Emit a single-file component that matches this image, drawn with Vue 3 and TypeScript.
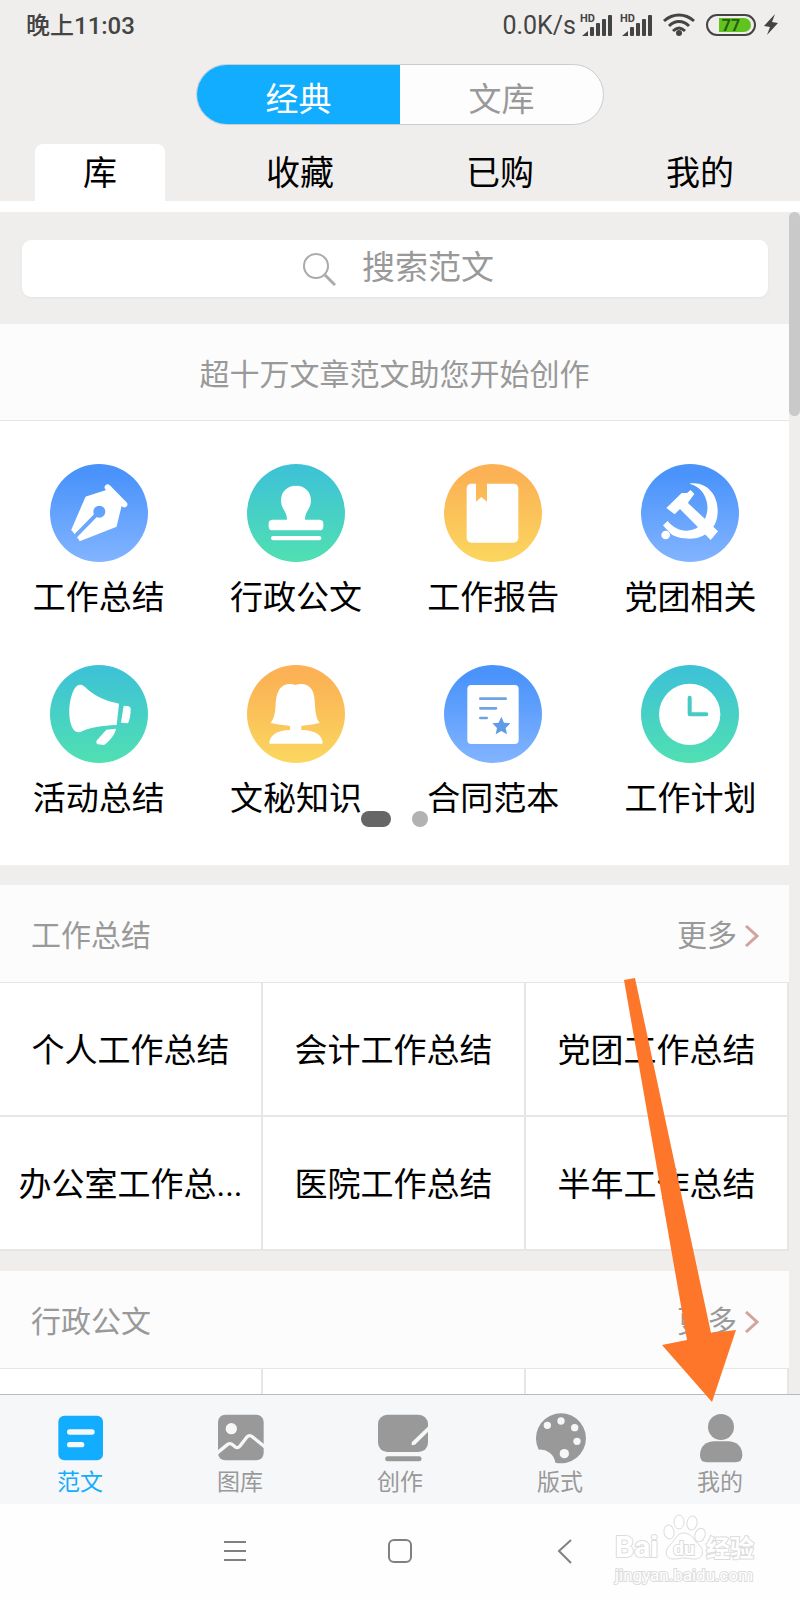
<script setup lang="ts">
import { ref } from 'vue'

interface Category {
  label: string
  icon: string
}
interface Section {
  title: string
  items: string[]
}

const segments: string[] = ['经典', '文库']
const tabs: string[] = ['库', '收藏', '已购', '我的']
const activeSegment = ref(0)
const activeTab = ref(0)
const activeNav = ref(0)
const keyword = ref('')

const categories: Category[] = [
  { label: '工作总结', icon: 'pen' },
  { label: '行政公文', icon: 'stamp' },
  { label: '工作报告', icon: 'book' },
  { label: '党团相关', icon: 'party' },
  { label: '活动总结', icon: 'horn' },
  { label: '文秘知识', icon: 'person' },
  { label: '合同范本', icon: 'contract' },
  { label: '工作计划', icon: 'clock' },
]

const tints: Record<string, string> = {
  pen: 'url(#tint-blue)',
  stamp: 'url(#tint-teal)',
  book: 'url(#tint-orange)',
  party: 'url(#tint-blue)',
  horn: 'url(#tint-teal)',
  person: 'url(#tint-orange)',
  contract: 'url(#tint-blue)',
  clock: 'url(#tint-teal)',
}

const sections: Section[] = [
  {
    title: '工作总结',
    items: ['个人工作总结', '会计工作总结', '党团工作总结', '办公室工作总...', '医院工作总结', '半年工作总结'],
  },
  { title: '行政公文', items: ['', '', ''] },
]

const navItems: string[] = ['范文', '图库', '创作', '版式', '我的']
const barHeights: number[] = [9, 13, 17, 21]
</script>

<template>
  <div class="app">
    <svg class="defs" width="0" height="0" aria-hidden="true">
      <defs>
        <linearGradient id="tint-blue" gradientUnits="userSpaceOnUse" x1="0" y1="0" x2="0" y2="294">
          <stop offset="0.1" stop-color="#4a93fb" />
          <stop offset="1" stop-color="#82b4ff" />
        </linearGradient>
        <linearGradient id="tint-teal" gradientUnits="userSpaceOnUse" x1="0" y1="0" x2="0" y2="294">
          <stop offset="0.05" stop-color="#3ec2d6" />
          <stop offset="1" stop-color="#50e0b2" />
        </linearGradient>
        <linearGradient id="tint-orange" gradientUnits="userSpaceOnUse" x1="0" y1="0" x2="0" y2="294">
          <stop offset="0.1" stop-color="#fbb154" />
          <stop offset="1" stop-color="#fbd75f" />
        </linearGradient>
      </defs>
    </svg>

    <header class="header">
      <div class="status">
        <span class="time">晚上11:03</span>
        <div class="status-right">
          <span class="rate">0.0K/s</span>
          <svg v-for="n in 2" :key="n" class="signal" width="32" height="24" viewBox="0 0 32 24">
            <text x="0" y="9" class="hd">HD</text>
            <path d="M2 23 L8 18 V23Z" fill="#444" />
            <rect
              v-for="(h, i) in barHeights"
              :key="i"
              :x="10 + i * 6"
              :y="23 - h"
              width="4"
              :height="h"
              rx="1"
              fill="#444"
            />
          </svg>
          <svg class="wifi" width="32" height="24" viewBox="0 0 32 24" fill="none" stroke="#444" stroke-width="3">
            <path d="M1 8 C10 0 22 0 31 8" />
            <path d="M6 13 C12 7 20 7 26 13" />
            <path d="M10 18 C14 14 18 14 22 18" />
            <circle cx="16" cy="20" r="3" fill="#444" stroke="none" />
          </svg>
          <svg class="battery" width="50" height="24" viewBox="0 0 50 24">
            <rect x="1" y="2" width="48" height="20" rx="10" fill="none" stroke="#444" stroke-width="2" />
            <path d="M13 5 H38 A7 7 0 0 1 38 19 H13Z" fill="#5fc41f" />
            <text x="25" y="18" text-anchor="middle" class="level">77</text>
          </svg>
          <svg class="bolt" width="14" height="24" viewBox="0 0 14 24">
            <path d="M11 1 L0 13 L6 14 L3 22 L14 10 L8 9Z" fill="#444" />
          </svg>
        </div>
      </div>

      <div class="segment">
        <button
          v-for="(s, i) in segments"
          :key="s"
          type="button"
          :class="{ on: i === activeSegment }"
          @click="activeSegment = i"
        >
          {{ s }}
        </button>
      </div>

      <nav class="tabs">
        <button
          v-for="(t, i) in tabs"
          :key="t"
          type="button"
          :class="{ on: i === activeTab }"
          @click="activeTab = i"
        >
          <span>{{ t }}</span>
        </button>
      </nav>
    </header>

    <div class="scroller">
      <main class="content">
        <div class="search">
          <label class="search-box">
            <svg width="34" height="34" viewBox="0 0 34 34" fill="none" stroke="#aaa" stroke-width="2">
              <circle cx="14" cy="14" r="12" />
              <path d="M23 23 L33 33" stroke-width="3" />
            </svg>
            <input v-model="keyword" type="text" placeholder="搜索范文" aria-label="搜索范文" />
          </label>
        </div>

        <h1 class="slogan">超十万文章范文助您开始创作</h1>

        <div class="categories">
          <button v-for="c in categories" :key="c.label" type="button" class="category">
            <svg width="98" height="98" viewBox="0 0 294 294" fill="#fff">
              <circle cx="147" cy="147" r="147" :fill="tints[c.icon]" />
              <g v-if="c.icon === 'pen'">
                <path
                  d="M66 200 L109 100 L172 80 L212 125 L197 186 L88 229"
                  stroke="#fff"
                  stroke-width="6"
                  stroke-linejoin="round"
                />
                <path d="M60 233 L148 143" :stroke="tints.pen" stroke-width="12" />
                <circle cx="148" cy="143" r="18" :fill="tints.pen" />
                <path d="M173 70 L223 121" stroke="#fff" stroke-width="18" stroke-linecap="round" />
              </g>
              <g v-else-if="c.icon === 'stamp'">
                <path
                  d="M147 65 C174 65 192 84 192 109 C192 137 174 140 174 167 H217 Q229 167 229 178 V188 Q229 199 217 199 H77 Q65 199 65 188 V178 Q65 167 77 167 H120 C120 140 102 137 102 109 C102 84 120 65 147 65Z"
                />
                <rect x="72" y="216" width="151" height="13" rx="6" />
              </g>
              <g v-else-if="c.icon === 'book'">
                <rect x="68" y="59" width="155" height="177" rx="14" />
                <path d="M96 56 H129 V113 L112 99 L96 113Z" :fill="tints.book" />
              </g>
              <g v-else-if="c.icon === 'party'">
                <path
                  d="M145 59 C198 51 232 94 230 144 C229 194 192 224 147 224 C122 224 103 219 91 211 C88 207 76 196 66 184 L80 171 C95 190 117 201 137 200 C178 199 202 164 199 124 C196 94 178 66 145 59Z"
                />
                <circle cx="74" cy="213" r="13" />
                <path
                  d="M76 132 L122 87 L138 87 L149 78 L160 90 L145 110 L141 117 L231 202 L209 228 L117 135 L101 151Z"
                />
              </g>
              <g v-else-if="c.icon === 'horn'">
                <path
                  d="M91 59 C103 59 113 78 148 97 C176 111 194 113 207 116 L200 180 C154 182 120 188 98 198 C82 207 72 200 65 184 C53 154 56 102 73 72 C79 62 84 59 91 59Z"
                />
                <path d="M221 122 L236 124 Q242 126 242 133 C242 150 239 166 234 175 L213 173Z" />
                <path d="M169 194 L198 191 C196 208 173 234 162 240 L143 238 Q136 234 141 226Z" />
              </g>
              <g v-else-if="c.icon === 'person'">
                <path
                  d="M145 60 C163 53 190 56 199 84 C208 114 199 148 218 174 C200 179 182 180 163 183 V195 C206 195 227 211 227 236 H67 C67 211 90 195 129 195 V183 C110 180 90 179 71 174 C93 144 80 114 92 84 C102 56 128 53 145 60Z"
                />
              </g>
              <g v-else-if="c.icon === 'contract'">
                <rect x="70" y="60" width="154" height="177" rx="12" />
                <path
                  d="M109 101 H185 M109 130 H156 M109 159 H128"
                  stroke="#6ea3e4"
                  stroke-width="8"
                  stroke-linecap="round"
                />
                <path
                  d="M172 155 L180 173 L199 175 L185 189 L189 208 L172 198 L155 208 L159 189 L145 175 L164 173Z"
                  fill="#5f9be6"
                />
              </g>
              <g v-else>
                <circle cx="146" cy="148" r="92" />
                <path
                  d="M146 98 V148 H196"
                  fill="none"
                  stroke="#46cac4"
                  stroke-width="12"
                  stroke-linecap="round"
                  stroke-linejoin="round"
                />
              </g>
            </svg>
            <span>{{ c.label }}</span>
          </button>
          <div class="pager"><i class="current"></i><i></i></div>
        </div>

        <section v-for="s in sections" :key="s.title" class="section">
          <div class="section-head">
            <h2>{{ s.title }}</h2>
            <a href="#" class="more">
              更多
              <svg width="14" height="22" viewBox="0 0 14 22" fill="none" stroke="#d4a3a0" stroke-width="3">
                <path d="M1 1 L12 11 L1 21" />
              </svg>
            </a>
          </div>
          <div class="cells">
            <a v-for="(item, i) in s.items" :key="i" href="#" class="cell">{{ item }}</a>
          </div>
        </section>
      </main>
      <div class="track"><div class="thumb"></div></div>
    </div>

    <nav class="nav">
      <button
        v-for="(n, i) in navItems"
        :key="n"
        type="button"
        :class="{ on: i === activeNav }"
        @click="activeNav = i"
      >
        <svg width="50" height="50" viewBox="0 0 150 150" fill="currentColor">
          <g v-if="i === 0">
            <rect x="10" y="8" width="134" height="134" rx="18" />
            <path d="M44 57 H111 M44 95 H80" stroke="#f6f7f9" stroke-width="16" stroke-linecap="round" />
          </g>
          <g v-else-if="i === 1">
            <rect x="9" y="5" width="137" height="137" rx="22" />
            <circle cx="49" cy="47" r="17" fill="#f6f7f9" />
            <path
              d="M5 121 L37 95 Q46 88 55 97 L60 101 Q68 108 75 99 L94 74 Q103 63 113 72 L151 103"
              fill="none"
              stroke="#f6f7f9"
              stroke-width="10"
            />
          </g>
          <g v-else-if="i === 2">
            <rect x="9" y="5" width="150" height="112" rx="28" />
            <path d="M164 36 L110 88 V97 L120 95 L164 52Z" fill="#f6f7f9" />
            <path d="M38 137 H132" stroke="currentColor" stroke-width="15" stroke-linecap="round" />
          </g>
          <g v-else-if="i === 3">
            <path d="M11 110 A75 75 0 1 1 61 149 A46 46 0 0 0 11 110Z" />
            <g fill="#f6f7f9">
              <circle cx="37" cy="37" r="11" />
              <circle cx="78" cy="24" r="11" />
              <circle cx="119" cy="44" r="11" />
              <circle cx="126" cy="85" r="11" />
              <circle cx="88" cy="122" r="14" />
            </g>
          </g>
          <g v-else>
            <circle cx="78" cy="42" r="39" />
            <path
              d="M15 127 C15 100 33 85 58 85 H99 C124 85 142 100 142 127 Q142 148 121 148 H36 Q15 148 15 127Z"
            />
          </g>
        </svg>
        <span>{{ n }}</span>
      </button>
    </nav>

    <footer class="system">
      <div class="keys">
        <button type="button" aria-label="菜单">
          <svg width="26" height="26" viewBox="0 0 26 26" fill="none" stroke="#808080" stroke-width="2">
            <path d="M2 4 H24 M2 13 H24 M2 22 H24" />
          </svg>
        </button>
        <button type="button" aria-label="主页">
          <svg width="26" height="26" viewBox="0 0 26 26" fill="none" stroke="#808080" stroke-width="2">
            <rect x="2" y="2" width="22" height="22" rx="5" />
          </svg>
        </button>
        <button type="button" aria-label="返回">
          <svg width="26" height="26" viewBox="0 0 26 26" fill="none" stroke="#808080" stroke-width="2">
            <path d="M19 2 L7 13 L19 25" />
          </svg>
        </button>
      </div>
      <svg class="mark" width="146" height="76" viewBox="0 0 146 76" fill="#fff" stroke="#dcdcdc">
        <text x="3" y="45" class="mark-big">Bai</text>
        <ellipse cx="57" cy="20" rx="5" ry="7" transform="rotate(-12 57 20)" />
        <ellipse cx="67" cy="10" rx="5" ry="7" />
        <ellipse cx="80" cy="11" rx="5" ry="7" transform="rotate(10 80 11)" />
        <ellipse cx="88" cy="23" rx="5" ry="7" transform="rotate(20 88 23)" />
        <path
          d="M72 21 C80 21 82 29 87 33 C93 38 91 47 83 47 C78 47 76 46 72 46 C68 46 66 47 61 47 C53 47 52 38 58 33 C63 29 64 21 72 21Z"
        />
        <text x="72" y="43" text-anchor="middle" class="mark-du">du</text>
        <text x="94" y="45" class="mark-cn">经验</text>
        <text x="3" y="69" class="mark-url">jingyan.baidu.com</text>
      </svg>
    </footer>

    <svg class="arrow" width="75" height="425" viewBox="0 0 75 425">
      <path d="M-38 2 L-27 0 L49 355 L74 352 L50 424 L0 367 L25 362Z" fill="#fe7629" />
    </svg>
  </div>
</template>

<style>
body {
  margin: 0;
}
</style>

<style scoped>
.app {
  position: relative;
  display: flex;
  flex-direction: column;
  height: 100vh;
  overflow: hidden;
  background: #efeeec;
  color: #000;
  font-family: Roboto, 'Noto Sans CJK SC', sans-serif;
}
.defs {
  position: absolute;
}
button {
  margin: 0;
  padding: 0;
  border: 0;
  background: none;
  color: inherit;
  font: inherit;
}
a {
  color: inherit;
  text-decoration: none;
}
h1,
h2 {
  margin: 0;
  font-weight: 400;
}
.header {
  border-bottom: 11px solid #fff;
}
.status {
  display: flex;
  align-items: center;
  justify-content: space-between;
  height: 50px;
  padding: 0 22px 0 26px;
  color: #444;
}
.time {
  padding-bottom: 4px;
  font-size: 24px;
  font-weight: 500;
}
.status-right {
  display: flex;
  align-items: center;
}
.rate {
  margin-right: 4px;
  font-size: 25px;
}
.signal {
  margin-right: 8px;
}
.hd {
  font-size: 11px;
  font-weight: 700;
  fill: #444;
}
.wifi {
  margin: 0 11px 0 3px;
}
.level {
  font-size: 16px;
  font-weight: 700;
  fill: #2c5a12;
}
.bolt {
  margin-left: 8px;
}
.segment {
  display: flex;
  width: 408px;
  height: 61px;
  margin: 14px auto 0;
  box-sizing: border-box;
  overflow: hidden;
  border: 1px solid #ccc;
  border-radius: 31px;
  background: #fdfdfd;
}
.segment button {
  flex: 1;
  padding-top: 4px;
  color: #999;
  font-size: 33px;
}
.segment .on {
  background: #12adff;
  color: #fff;
}
.tabs {
  display: flex;
  margin-top: 19px;
}
.tabs button {
  flex: 1;
  display: flex;
  justify-content: center;
  font-size: 34px;
}
.tabs span {
  min-width: 130px;
  height: 57px;
  border-radius: 8px 8px 0 0;
  line-height: 59px;
}
.tabs .on span {
  background: #fff;
}
.scroller {
  display: flex;
  flex: 1;
  min-height: 0;
  overflow: hidden;
}
.content {
  flex: 1;
  min-width: 0;
}
.track {
  width: 11px;
}
.thumb {
  height: 204px;
  border-radius: 6px;
  background: #c9c9c9;
}
.search {
  padding: 28px 21px 27px 22px;
}
.search-box {
  display: flex;
  align-items: center;
  justify-content: center;
  gap: 26px;
  height: 57px;
  padding-left: 8px;
  border-radius: 9px;
  background: #fff;
  box-shadow: 0 1px 2px #e4e3e6;
}
.search-box input {
  width: 134px;
  padding: 0 0 2px;
  border: 0;
  outline: 0;
  background: none;
  color: #333;
  font: inherit;
  font-size: 33px;
}
.search-box input::placeholder {
  color: #999;
  opacity: 1;
}
.slogan {
  height: 96px;
  border-bottom: 1px solid #e6e6e6;
  background: #fcfcfc;
  color: #999;
  font-size: 30px;
  line-height: 102px;
  text-align: center;
}
.categories {
  position: relative;
  display: grid;
  grid-template-columns: repeat(4, 1fr);
  row-gap: 42px;
  padding: 43px 0 41px;
  background: #fff;
}
.category {
  display: flex;
  flex-direction: column;
  align-items: center;
  gap: 11px;
  font-size: 33px;
  line-height: 50px;
}
.pager {
  position: absolute;
  right: 0;
  bottom: 38px;
  left: 0;
  display: flex;
  justify-content: center;
  gap: 21px;
}
.pager i {
  width: 16px;
  height: 16px;
  border-radius: 8px;
  background: #b2b2b2;
}
.pager .current {
  width: 30px;
  background: #666;
}
.section {
  margin-top: 20px;
}
.section-head {
  display: flex;
  align-items: center;
  justify-content: space-between;
  height: 97px;
  padding: 0 30px 0 31px;
  border-bottom: 1px solid #e6e6e6;
  background: #fcfcfc;
  color: #999;
}
.section-head h2,
.more {
  padding-top: 4px;
  font-size: 30px;
  line-height: 50px;
}
.more {
  display: flex;
  align-items: center;
  gap: 8px;
}
.cells {
  display: grid;
  grid-template-columns: repeat(3, 1fr);
  background: #fff;
}
.cell {
  height: 132px;
  border-right: 2px solid #e6e6e6;
  border-bottom: 2px solid #e6e6e6;
  font-size: 33px;
  line-height: 136px;
  text-align: center;
  white-space: nowrap;
}
.nav {
  display: flex;
  height: 109px;
  border-top: 1px solid #b9babd;
  background: #f6f7f9;
  color: #999;
}
.nav button {
  display: flex;
  flex: 1;
  flex-direction: column;
  align-items: center;
  padding-top: 18px;
  font-size: 23px;
  line-height: 39px;
}
.nav svg {
  overflow: visible;
}
.nav .on {
  color: #12adff;
}
.system {
  position: relative;
  display: flex;
  justify-content: center;
  height: 96px;
  background: #fefefe;
}
.keys {
  display: flex;
  width: 62%;
}
.keys button {
  display: flex;
  flex: 1;
  align-items: center;
  justify-content: center;
  padding-bottom: 2px;
}
.mark {
  position: absolute;
  right: 42px;
  bottom: 12px;
}
.mark text {
  paint-order: stroke;
  stroke-width: 2px;
}
.mark .mark-big {
  font-size: 30px;
  font-weight: 700;
}
.mark .mark-du {
  font-size: 19px;
  font-weight: 700;
}
.mark .mark-cn {
  font-size: 24px;
  font-weight: 700;
}
.mark .mark-url {
  font-size: 17px;
}
.arrow {
  position: absolute;
  right: 63px;
  bottom: 197px;
  overflow: visible;
  pointer-events: none;
}
</style>
